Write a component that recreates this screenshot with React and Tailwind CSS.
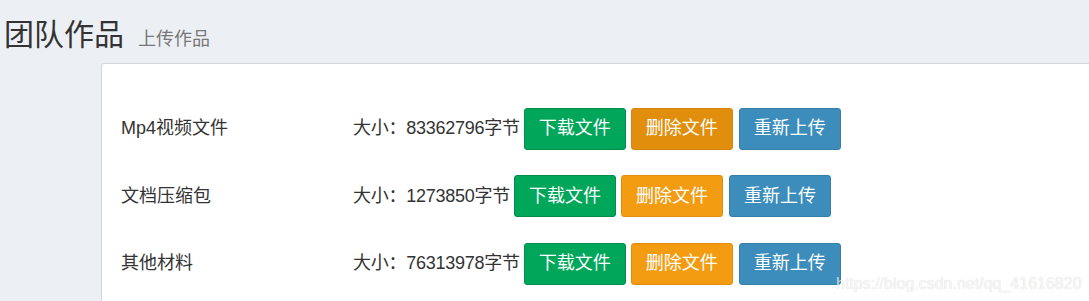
import React from "react";

const files = [
  { name: "Mp4视频文件", size: "83362796", deleteHover: true },
  { name: "文档压缩包", size: "1273850" },
  { name: "其他材料", size: "76313978" },
];

export default function App() {
  return (
    <div
      className="relative min-h-[301px] bg-[#ecf0f5] text-[#333] overflow-hidden"
      style={{ fontFamily: '"Liberation Sans", "Noto Sans CJK SC", sans-serif' }}
    >
      {/* header */}
      <div className="flex items-baseline pl-[4px] pt-[18px] mb-[10px]">
        <h1 className="text-[30px] leading-[33px] font-normal text-[#333]">团队作品</h1>
        <small className="ml-[14px] text-[18px] text-[#777]">上传作品</small>
      </div>

      {/* card */}
      <div className="ml-[101px] bg-white border-t border-l border-[#d2d6de] rounded-tl-[3px] pt-[31px] pl-[19px] min-h-[240px]">
        {files.map((f) => (
          <div key={f.name} className="flex items-center h-[67.5px] text-[18px]">
            <div className="w-[232px]">{f.name}</div>
            <span className="tracking-[-0.25px]">大小：{f.size}字节</span>
            <div className="flex items-center gap-[5px] ml-[4px] text-white">
              <button className="h-[42px] w-[102px] rounded-[3px] border border-[#008d4c] bg-[#00a65a]">
                下载文件
              </button>
              <button
                className={
                  f.deleteHover
                    ? "h-[42px] w-[102px] rounded-[3px] border border-[#d58512] bg-[#e08e0b]"
                    : "h-[42px] w-[102px] rounded-[3px] border border-[#e08e0b] bg-[#f39c12]"
                }
              >
                删除文件
              </button>
              <button className="h-[42px] w-[102px] rounded-[3px] border border-[#367fa9] bg-[#3c8dbc] ml-[1px]">
                重新上传
              </button>
            </div>
          </div>
        ))}
      </div>

      {/* watermark */}
      <div className="absolute left-[836px] top-[272px] text-[16px] text-[rgba(255,255,255,0.75)] [text-shadow:0_0_1px_rgba(0,0,0,0.18)] pointer-events-none">
        https://blog.csdn.net/qq_41616820
      </div>
    </div>
  );
}
